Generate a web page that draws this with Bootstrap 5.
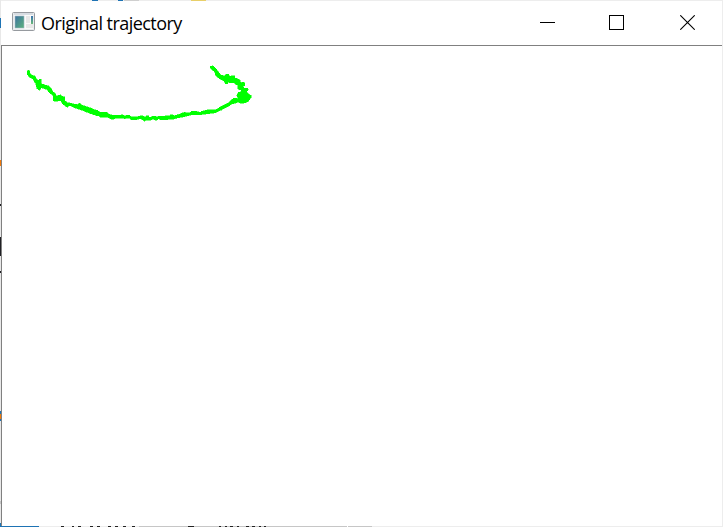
<!DOCTYPE html>
<html lang="en">
<head>
<meta charset="utf-8">
<title>Original trajectory</title>
<link href="https://cdn.jsdelivr.net/npm/bootstrap@5.3.0/dist/css/bootstrap.min.css" rel="stylesheet">
<style>
body{width:723px;height:527px;overflow:hidden;background:#fff}
.win{width:723px;height:527px;padding:1px}
.edge{inset:0;z-index:2;pointer-events:none}
.titlebar{height:44px;padding-left:11px;padding-bottom:1px}
.app-icon{margin-bottom:1px}
.caption-text{font-family:"Open Sans","Noto Sans",sans-serif;font-size:18px;line-height:24px;color:#000;margin-left:5px;letter-spacing:-.55px}
.ctl{width:70px;height:43px;border-radius:0}
.ctl-min{width:69px}
.ctl-max{width:69px;margin-right:1px}
.canvas-area{border-top:1px solid #808080;border-left:1px solid #808080}
.trace{stroke:#0f0;stroke-width:1.5}
svg{display:block}
</style>
</head>
<body>
<main class="win position-relative d-flex flex-column">
  <header class="titlebar d-flex align-items-center flex-shrink-0">
    <svg class="app-icon" width="24" height="20" viewBox="0 0 24 20">
      <defs><linearGradient id="g" x2="1" y2="1"><stop stop-color="#3d72a0"/><stop offset="1" stop-color="#5cb37c"/></linearGradient>
      <linearGradient id="h" x2="0" y2="1"><stop stop-color="#3973b0"/><stop offset="1" stop-color="#69b977"/></linearGradient></defs>
      <rect x=".5" y=".5" width="22" height="18" rx="1" fill="#e9ecee" stroke="#969a9f"/>
      <path d="M2 2H21" stroke="#c6cdd6"/>
      <rect x="2" y="3" width="19" height="14" fill="#fafafa"/>
      <rect x="3" y="4" width="9" height="12" fill="url(#g)" stroke="#a3b7c3" stroke-width=".6"/>
      <path d="M14 4h4v7h-4zM14 12h7v4h-7z" fill="#e7e7e7"/>
      <rect x="19" y="4" width="2" height="8" fill="url(#h)"/>
    </svg>
    <span class="caption-text">Original trajectory</span>
    <div class="d-flex ms-auto">
      <button class="ctl ctl-min btn p-0 border-0 d-flex align-items-center justify-content-center" aria-label="Minimize"><svg width="15" height="15" shape-rendering="crispEdges"><path d="M0 7.5H15" stroke="#000"/></svg></button>
      <button class="ctl ctl-max btn p-0 border-0 d-flex align-items-center justify-content-center" aria-label="Maximize"><svg width="15" height="15" shape-rendering="crispEdges"><rect x=".5" y=".5" width="14" height="14" fill="none" stroke="#000"/></svg></button>
      <button class="ctl btn p-0 border-0 d-flex align-items-center justify-content-center" aria-label="Close"><svg width="15" height="15"><path d="M.3 .3L14.7 14.7M14.7 .3L.3 14.7" stroke="#000" stroke-width="1.1"/></svg></button>
    </div>
  </header>
  <section class="canvas-area flex-grow-1">
    <svg width="720" height="480" viewBox="2 46 720 480" shape-rendering="crispEdges" fill="#0f0">
      <path class="trace" transform="translate(20.2 60.2) scale(.33333)" d="M21 32L27 30L30 42L45 48L50 58L57 62V57H63V71L85 77L92 84L97 94L106 100L109 107L121 104L124 108L134 110L133 122L142 127L160 131L172 133L177 128L186 135L205 141L225 149L240 155V168L228 166L205 158L180 148L166 144L150 136L141 141L127 132L122 122L100 123L98 105L88 99L80 88L64 83L58 90L50 85L46 70L38 56L27 50L21 42Z"/>
      <path class="trace" transform="translate(95.2 90.2) scale(.33333)" d="M0 64L3 60H8L10 66H30L33 66H36L40 71L48 74L62 76L82 74L90 78L93 75H102L108 79L125 80L135 77H141L150 80L153 77H160L162 81H168L171 78H180L185 81L190 78H196L205 78L225 76V74H234L237 77L250 73L260 69L270 65V78L255 79L235 87L200 89H195L190 86L184 90H180L174 86L168 90H160L150 90V93H147L146 90L135 86L120 89H108L102 84H90V87H88L86 84H60L57 87H48L38 81H15L10 75L0 74Z"/>
      <path class="trace" transform="translate(175.2 60.2) scale(.33333)" d="M105 19L112 17L120 22L130 35L135 43L147 48L153 42H160L165 50L168 46H179L178 54L186 55L194 60L198 68L204 66L209 69L208 76L204 79L208 84H218L219 90L214 94L222 103L229 107L228 112L223 118L218 125L204 129H195L190 126L170 132L140 149L120 158L80 163L50 164L15 172L0 174V166L15 162L30 158L45 157L50 153H60L75 156L80 153L100 148L120 149L140 138L160 127L170 118L176 114L188 115L185 105L189 97L199 93L196 89L188 87V76L175 68H165L157 64L158 70H151L145 62L133 56L122 46L117 34L107 26Z"/>
    </svg>
  </section>
  <svg class="edge position-absolute" width="723" height="527" shape-rendering="crispEdges">
    <path d="M0 .5H723M722.5 0V527M0 526.5H723" stroke="#ededed"/>
    <path d="M.5 0V527" stroke="#e8e8e8"/>
    <path d="M92 .5h6M118 .5h5M.5 18v10M0 526.5H39M.5 411v10M.5 523v4" stroke="#1e73b4"/>
    <path d="M124 .5h15" stroke="#cfcfcf"/>
    <path d="M191 .5h15" stroke="#e8cf69"/>
    <path d="M.5 160v6M.5 414v5" stroke="#f27b0c"/>
    <path d="M.5 204v2M.5 237v19M.5 271v2" stroke="#202024"/>
    <path d="M.5 501v3M139 526.5H372" stroke="#c6c6c6"/>
    <path d="M61 526.5h3m8 0h2m4 0h3m9 0h3m4 0h3m8 0h3m4 0h3m5 0h3m6 0h3M188 526.5h6M219 526.5h2m4 0h2m3 0h3m4 0h2m7 0h3m3 0h3m4 0h2m3 0h2" stroke="#222"/>
    <path d="M347 526.5h1" stroke="#fff"/>
  </svg>
</main>
<script src="https://cdn.jsdelivr.net/npm/bootstrap@5.3.0/dist/js/bootstrap.bundle.min.js"></script>
</body>
</html>
